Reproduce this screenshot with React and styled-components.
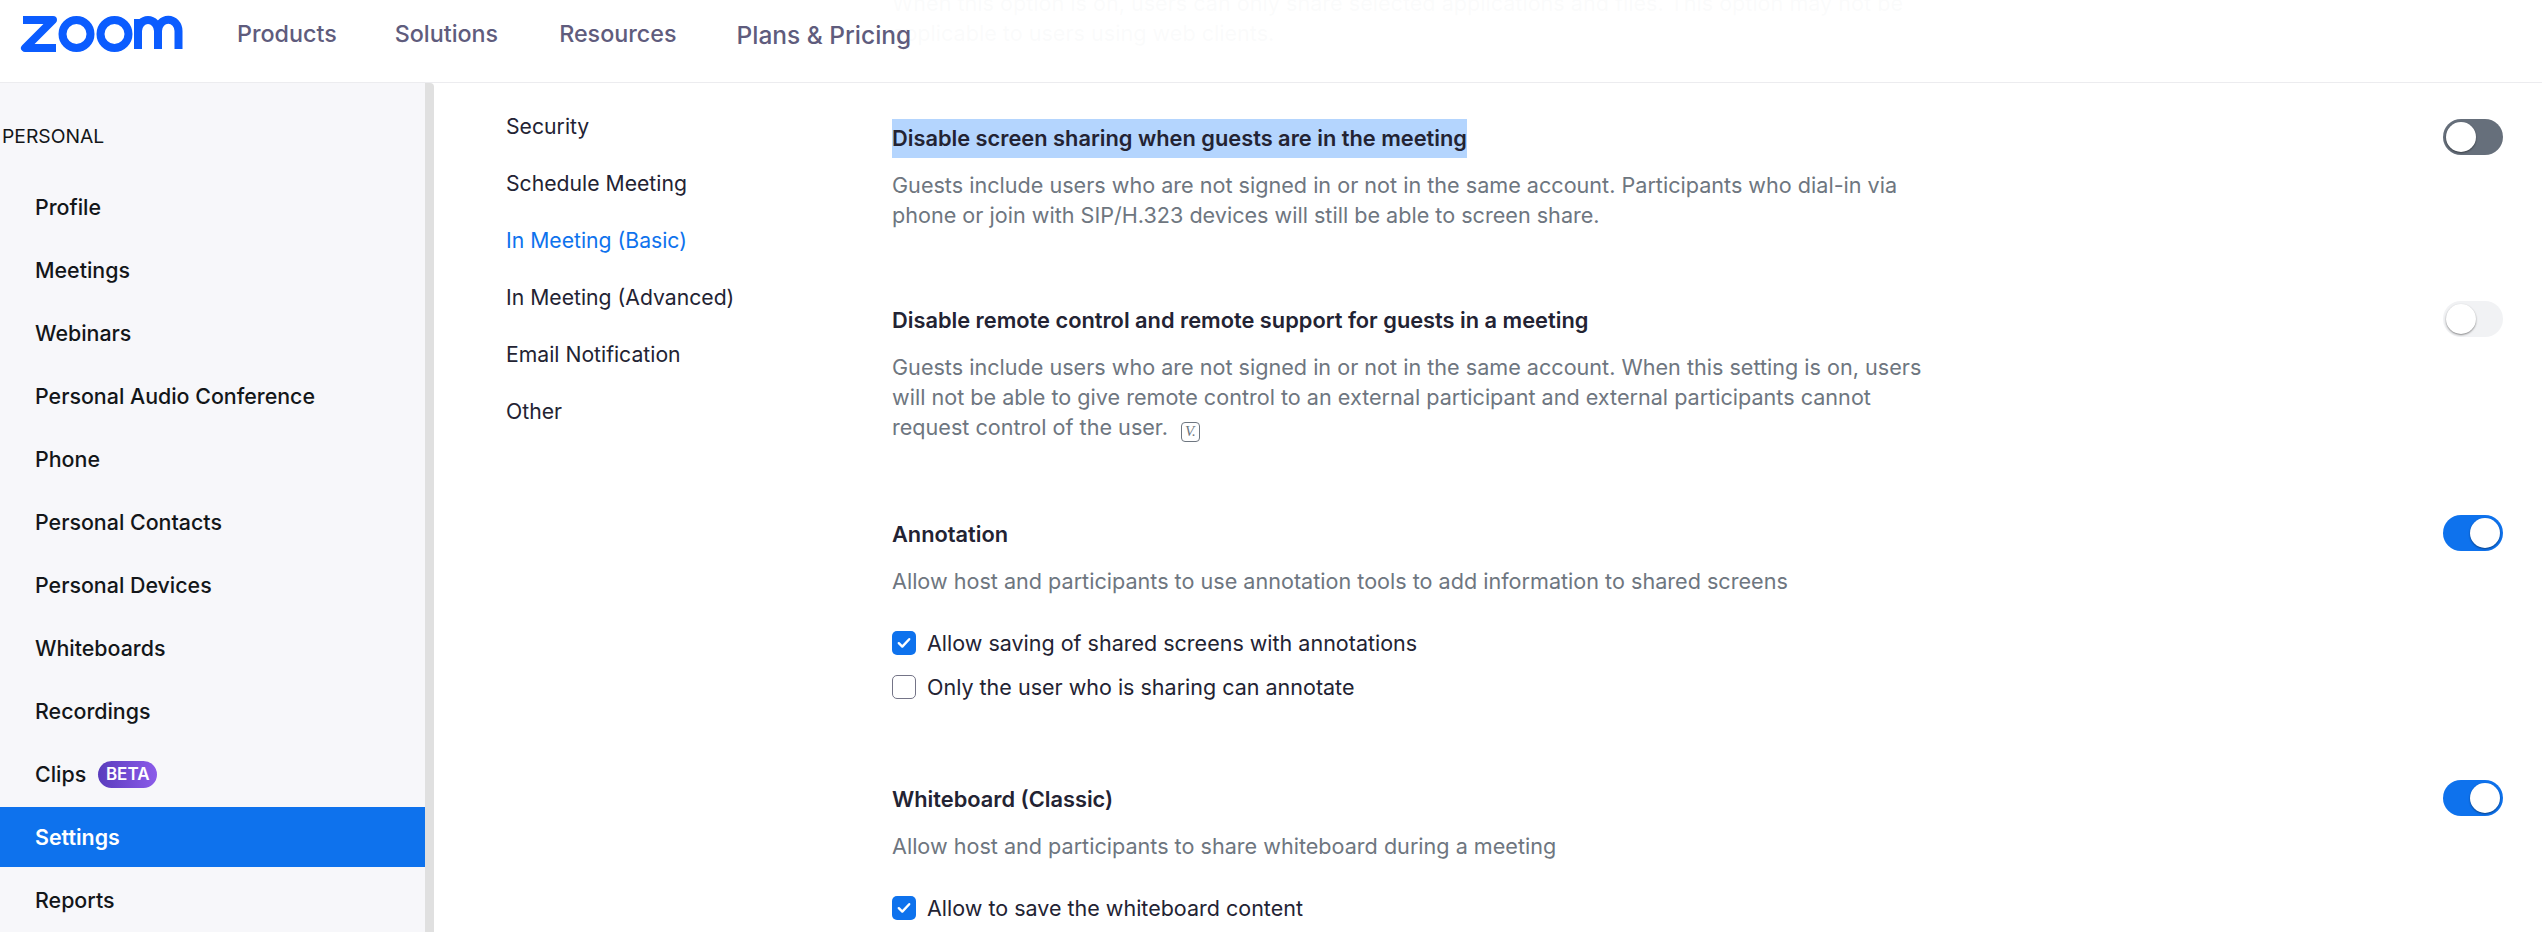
import React from 'react'
import styled, { createGlobalStyle } from 'styled-components'

const GlobalStyle = createGlobalStyle`
  html, body {
    margin: 0;
    height: 100%;
    overflow: hidden;
    background: #fff;
    font-family: Inter, "Noto Sans", sans-serif;
  }
`

const Page = styled.div`
  position: relative;
  display: flex;
  width: 2542px;
  height: 932px;
  overflow: hidden;
`

const Header = styled.header`
  position: absolute;
  top: 0;
  left: 0;
  right: 0;
  height: 83px;
  display: flex;
  align-items: center;
  padding: 0 0 15px 20px;
  box-sizing: border-box;
  background: rgba(255, 255, 255, 0.97);
  border-bottom: 1px solid #ececef;
`

const Logo = styled.svg`
  width: 164px;
  height: 38px;
  margin-right: 53px;
  flex: none;
`

const TopNav = styled.nav`
  display: flex;
  align-items: center;
`

const TopLink = styled.a`
  font-size: ${(p) => p.$size || 23.3}px;
  font-weight: 500;
  color: #5f5c7d;
  margin-right: ${(p) => p.$gap}px;
  margin-top: ${(p) => p.$drop || 0}px;
`

const Sidebar = styled.aside`
  flex: none;
  width: 425px;
  margin-top: 83px;
  background: #f7f7fa;
  border-right: 9px solid #e0e0e0;
  border-top-right-radius: 4px;
`

const SideHeading = styled.div`
  font-size: 19.3px;
  color: #131619;
  padding: 41px 0 0 2px;
  line-height: 24px;
  margin-bottom: 29px;
`

const SideList = styled.ul`
  list-style: none;
  margin: 0;
  padding: 0;
  display: flex;
  flex-direction: column;
  gap: 3px;
`

const SideItem = styled.li`
  height: 60px;
  display: flex;
  align-items: center;
  gap: 12px;
  padding-left: 35px;
  font-size: 21.4px;
  font-weight: ${(p) => (p.$active ? 600 : 500)};
  color: ${(p) => (p.$active ? '#fff' : '#131619')};
  background: ${(p) => (p.$active ? '#0e72ed' : 'transparent')};
`

const Beta = styled.span`
  width: 59px;
  height: 27px;
  border-radius: 14px;
  display: flex;
  align-items: center;
  justify-content: center;
  font-size: 17px;
  font-weight: 600;
  color: #fff;
  background: linear-gradient(90deg, #5a3cbd, #8b5be9);
`

const SubNav = styled.nav`
  flex: none;
  width: 458px;
  box-sizing: border-box;
  padding: 97px 0 0 72px;
`

const SubLink = styled.a`
  display: flex;
  align-items: center;
  height: 57px;
  font-size: 21.2px;
  color: ${(p) => (p.$active ? '#0e72ed' : '#232333')};
`

const Content = styled.main`
  flex: 1;
  margin-top: -12px;
  padding-right: 39px;
`

const Setting = styled.section`
  display: flex;
  justify-content: space-between;
  align-items: flex-start;
  margin-bottom: ${(p) => p.$after || 71}px;
`

const SettingBody = styled.div`
  width: 1040px;
`

const Title = styled.h3`
  margin: 0 0 12px;
  font-size: 21.8px;
  font-weight: 600;
  line-height: 39px;
  color: #232333;
`

const Selected = styled.span`
  display: inline-block;
  background: #b4d5fe;
`

const Desc = styled.p`
  margin: 0;
  font-size: 21.6px;
  line-height: 30px;
  color: #6e7680;
`

const VersionTag = styled.span`
  display: inline-flex;
  align-items: center;
  justify-content: center;
  width: 19px;
  height: 20px;
  margin-left: 13px;
  box-sizing: border-box;
  border: 1px solid #6e7680;
  border-radius: 4px;
  font-family: "Liberation Serif", serif;
  font-style: italic;
  font-size: 15px;
  line-height: 1;
  vertical-align: -1px;
`

const Checks = styled.div`
  margin-top: 25px;
`

const CheckRow = styled.label`
  display: flex;
  align-items: center;
  gap: 11px;
  height: 44px;
  font-size: 21.5px;
  color: #232333;
`

const Box = styled.span`
  flex: none;
  width: 24px;
  height: 24px;
  box-sizing: border-box;
  border-radius: 5px;
  display: flex;
  align-items: center;
  justify-content: center;
  background: ${(p) => (p.$on ? '#0e72ed' : '#fff')};
  border: ${(p) => (p.$on ? 'none' : '1px solid #747487')};
`

const toggleColors = { on: '#0e72ed', off: '#666f7b', disabled: '#f1f2f4' }

const Toggle = styled.span`
  flex: none;
  width: 60px;
  height: 36px;
  border-radius: 18px;
  box-sizing: border-box;
  padding: 3px;
  display: flex;
  justify-content: ${(p) => (p.$state === 'on' ? 'flex-end' : 'flex-start')};
  background: ${(p) => toggleColors[p.$state]};
  &::after {
    content: '';
    width: 30px;
    height: 30px;
    border-radius: 50%;
    background: #fff;
    box-shadow: 0 1px 2px rgba(0, 0, 0, 0.45);
  }
`

const sideItems = ['Profile', 'Meetings', 'Webinars', 'Personal Audio Conference', 'Phone', 'Personal Contacts', 'Personal Devices', 'Whiteboards', 'Recordings', 'Clips', 'Settings', 'Reports']
const subItems = ['Security', 'Schedule Meeting', 'In Meeting (Basic)', 'In Meeting (Advanced)', 'Email Notification', 'Other']

function Check({ on, children }) {
  return (
    <CheckRow>
      <Box $on={on}>
        {on && (
          <svg width="14" height="12" viewBox="0 0 14 12" fill="none">
            <path d="M1.8 6.2 5.3 9.6 12.2 2.2" stroke="#fff" strokeWidth="2.4" strokeLinecap="round" strokeLinejoin="round" />
          </svg>
        )}
      </Box>
      {children}
    </CheckRow>
  )
}

export default function App() {
  return (
    <Page>
      <GlobalStyle />
      <Sidebar>
        <SideHeading>PERSONAL</SideHeading>
        <SideList>
          {sideItems.map((item) => (
            <SideItem key={item} $active={item === 'Settings'}>
              {item}
              {item === 'Clips' && <Beta>BETA</Beta>}
            </SideItem>
          ))}
        </SideList>
      </Sidebar>
      <SubNav>
        {subItems.map((item) => (
          <SubLink key={item} $active={item === 'In Meeting (Basic)'}>{item}</SubLink>
        ))}
      </SubNav>
      <Content>
        <Setting>
          <SettingBody>
            <Desc>
              When this option is on, users can only share selected applications and files. This option may not be applicable to users using web clients.
            </Desc>
          </SettingBody>
        </Setting>
        <Setting>
          <SettingBody>
            <Title><Selected>Disable screen sharing when guests are in the meeting</Selected></Title>
            <Desc>Guests include users who are not signed in or not in the same account. Participants who dial-in via phone or join with SIP/H.323 devices will still be able to screen share.</Desc>
          </SettingBody>
          <Toggle $state="off" />
        </Setting>
        <Setting $after={73}>
          <SettingBody>
            <Title>Disable remote control and remote support for guests in a meeting</Title>
            <Desc>
              Guests include users who are not signed in or not in the same account. When this setting is on, users will not be able to give remote control to an external participant and external participants cannot request control of the user.
              <VersionTag>V.</VersionTag>
            </Desc>
          </SettingBody>
          <Toggle $state="disabled" />
        </Setting>
        <Setting>
          <SettingBody>
            <Title>Annotation</Title>
            <Desc>Allow host and participants to use annotation tools to add information to shared screens</Desc>
            <Checks>
              <Check on>Allow saving of shared screens with annotations</Check>
              <Check>Only the user who is sharing can annotate</Check>
            </Checks>
          </SettingBody>
          <Toggle $state="on" />
        </Setting>
        <Setting>
          <SettingBody>
            <Title>Whiteboard (Classic)</Title>
            <Desc>Allow host and participants to share whiteboard during a meeting</Desc>
            <Checks>
              <Check on>Allow to save the whiteboard content</Check>
            </Checks>
          </SettingBody>
          <Toggle $state="on" />
        </Setting>
      </Content>
      <Header>
        <Logo viewBox="0 0 164 38" fill="none" stroke="#0b5cff" strokeWidth="8">
          <path d="M3 5H33L5 33H36" strokeLinejoin="round" />
          <circle cx="56.5" cy="19" r="14" />
          <circle cx="94.5" cy="19" r="14" />
          <path d="M118 4V34M118 16A10 11 0 0 1 138 16V34M138 16A10 11 0 0 1 158.5 16V34" />
        </Logo>
        <TopNav>
          <TopLink $gap={58}>Products</TopLink>
          <TopLink $gap={61}>Solutions</TopLink>
          <TopLink $gap={60}>Resources</TopLink>
          <TopLink $gap={0} $drop={2} $size={24.5}>Plans &amp; Pricing</TopLink>
        </TopNav>
      </Header>
    </Page>
  )
}
